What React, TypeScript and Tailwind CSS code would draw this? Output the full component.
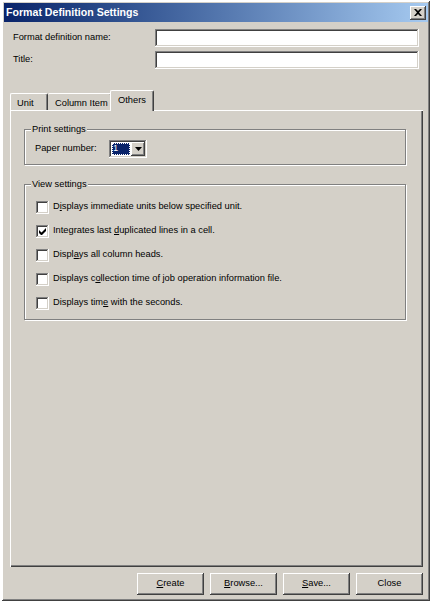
import * as React from "react";

const raised =
  "shadow-[inset_-1px_-1px_#404040,inset_1px_1px_#ffffff,inset_-2px_-2px_#808080,inset_2px_2px_#d4d0c8]";
const sunken =
  "shadow-[inset_-1px_-1px_#ffffff,inset_1px_1px_#808080,inset_-2px_-2px_#d4d0c8,inset_2px_2px_#404040]";
const etched = "border border-[#808080] shadow-[inset_1px_1px_#ffffff,1px_1px_#ffffff]";

function Mn({ pre, key_, post }: { pre: string; key_: string; post: string }) {
  return (
    <span>
      {pre}
      <span className="underline underline-offset-[1px]">{key_}</span>
      {post}
    </span>
  );
}

function Check({ checked }: { checked?: boolean }) {
  return (
    <div className={`w-[13px] h-[13px] bg-white shrink-0 flex items-center justify-center ${sunken}`}>
      {checked && (
        <svg width="7" height="7" viewBox="0 0 7 7">
          <path d="M0 2v3l2 2h1l4-4V0L2.5 4.5z" fill="#000" />
        </svg>
      )}
    </div>
  );
}

function Btn({ children }: { children: React.ReactNode }) {
  return (
    <div className={`w-[67px] h-[22px] flex items-center justify-center bg-[#d4d0c8] ${raised}`}>
      {children}
    </div>
  );
}

export default function App() {
  const options = [
    { label: <Mn pre="D" key_="i" post="splays immediate units below specified unit." />, checked: false },
    { label: <Mn pre="Integrates last " key_="d" post="uplicated lines in a cell." />, checked: true },
    { label: <Mn pre="Displ" key_="a" post="ys all column heads." />, checked: false },
    { label: <Mn pre="Displays c" key_="o" post="llection time of job operation information file." />, checked: false },
    { label: <Mn pre="Displays tim" key_="e" post=" with the seconds." />, checked: false },
  ];

  return (
    <div
      className="w-[433px] h-[605px] bg-white pt-[1px] pl-[2px] text-[9.3px] text-black"
      style={{ fontFamily: '"Liberation Sans", Arial, sans-serif' }}
    >
      <div className={`w-[428px] h-[600px] bg-[#d4d0c8] p-[2px] flex flex-col ${raised}`}>
        {/* Title bar */}
        <div className="h-[19px] flex items-center justify-between pl-[2px] pr-[2px] bg-gradient-to-r from-[#0a246a] to-[#a6caf0]">
          <span className="text-white font-bold text-[10.6px]">Format Definition Settings</span>
          <div className={`w-[16px] h-[14px] bg-[#d4d0c8] flex items-center justify-center ${raised}`}>
            <svg width="8" height="7" viewBox="0 0 8 7">
              <path d="M0 0h2l2 2 2-2h2L5 3.5 8 7H6L4 5 2 7H0l3-3.5z" fill="#000" />
            </svg>
          </div>
        </div>

        {/* Name / title */}
        <div className="pt-[7px] pl-[9px] pr-[9px] flex flex-col gap-[4px]">
          <div className="flex items-center h-[18px]">
            <span className="flex-1">Format definition name:</span>
            <div className={`w-[264px] h-[18px] bg-white ${sunken}`} />
          </div>
          <div className="flex items-center h-[18px]">
            <span className="flex-1">Title:</span>
            <div className={`w-[264px] h-[18px] bg-white ${sunken}`} />
          </div>
        </div>

        {/* Tabs */}
        <div className="mt-[22px] ml-[6px] mr-[5px]">
          <div className="flex items-end h-[19px]">
            <div className="w-[38px] h-[17px] pl-[6px] pt-[3px] border-l border-t border-white border-r border-r-[#404040] rounded-t-[2px] shadow-[inset_-1px_0_#808080]">
              Unit
            </div>
            <div className="w-[64px] h-[17px] pl-[7px] pt-[3px] border-t border-white border-r border-r-[#404040] rounded-t-[2px] shadow-[inset_-1px_0_#808080]">
              Column Item
            </div>
            <div className="relative z-10 -ml-[2px] -mb-[1px] w-[44px] h-[21px] pl-[7px] pt-[3px] bg-[#d4d0c8] border-l border-t border-white border-r border-r-[#404040] rounded-t-[2px] shadow-[inset_-1px_0_#808080]">
              Others
            </div>
          </div>

          {/* Panel */}
          <div className="h-[457px] pt-[19px] pl-[14px] pr-[17px] shadow-[inset_1px_1px_#ffffff,inset_-1px_-1px_#404040,inset_-2px_-2px_#808080]">
            {/* Print settings */}
            <div className={`${etched} pb-[6px]`}>
              <div className="-mt-[7px] ml-[6px] px-[1px] w-fit h-[13px] leading-[13px] bg-[#d4d0c8]">Print settings</div>
              <div className="mt-[4px] pl-[10px] flex items-center">
                <span className="w-[74px]">Paper number:</span>
                <div className={`w-[38px] h-[18px] bg-white p-[2px] flex ${sunken}`}>
                  <div className="flex-1 flex items-center p-[1px]">
                    <div className="h-full flex-1 bg-[#0a246a] text-white flex items-center pl-[1px] outline-1 outline-dotted outline-[#ffffff] -outline-offset-1">
                      1
                    </div>
                  </div>
                  <div className={`w-[14px] h-full bg-[#d4d0c8] flex items-center justify-center ${raised}`}>
                    <svg width="7" height="4" viewBox="0 0 7 4">
                      <path d="M0 0h7L3.5 4z" fill="#000" />
                    </svg>
                  </div>
                </div>
              </div>
            </div>

            {/* View settings */}
            <div className={`${etched} mt-[19px] pb-[4px]`}>
              <div className="-mt-[7px] ml-[6px] px-[1px] w-fit h-[13px] leading-[13px] bg-[#d4d0c8]">View settings</div>
              <div className="pt-[4px] pl-[11px] flex flex-col">
                {options.map((o, i) => (
                  <div key={i} className="h-[24px] flex items-center gap-[4px]">
                    <Check checked={o.checked} />
                    {o.label}
                  </div>
                ))}
              </div>
            </div>
          </div>
        </div>

        {/* Buttons */}
        <div className="mt-[6px] mr-[5px] flex justify-end gap-[6px]">
          <Btn>
            <Mn pre="" key_="C" post="reate" />
          </Btn>
          <Btn>
            <Mn pre="" key_="B" post="rowse..." />
          </Btn>
          <Btn>
            <Mn pre="" key_="S" post="ave..." />
          </Btn>
          <Btn>Close</Btn>
        </div>
      </div>
    </div>
  );
}
